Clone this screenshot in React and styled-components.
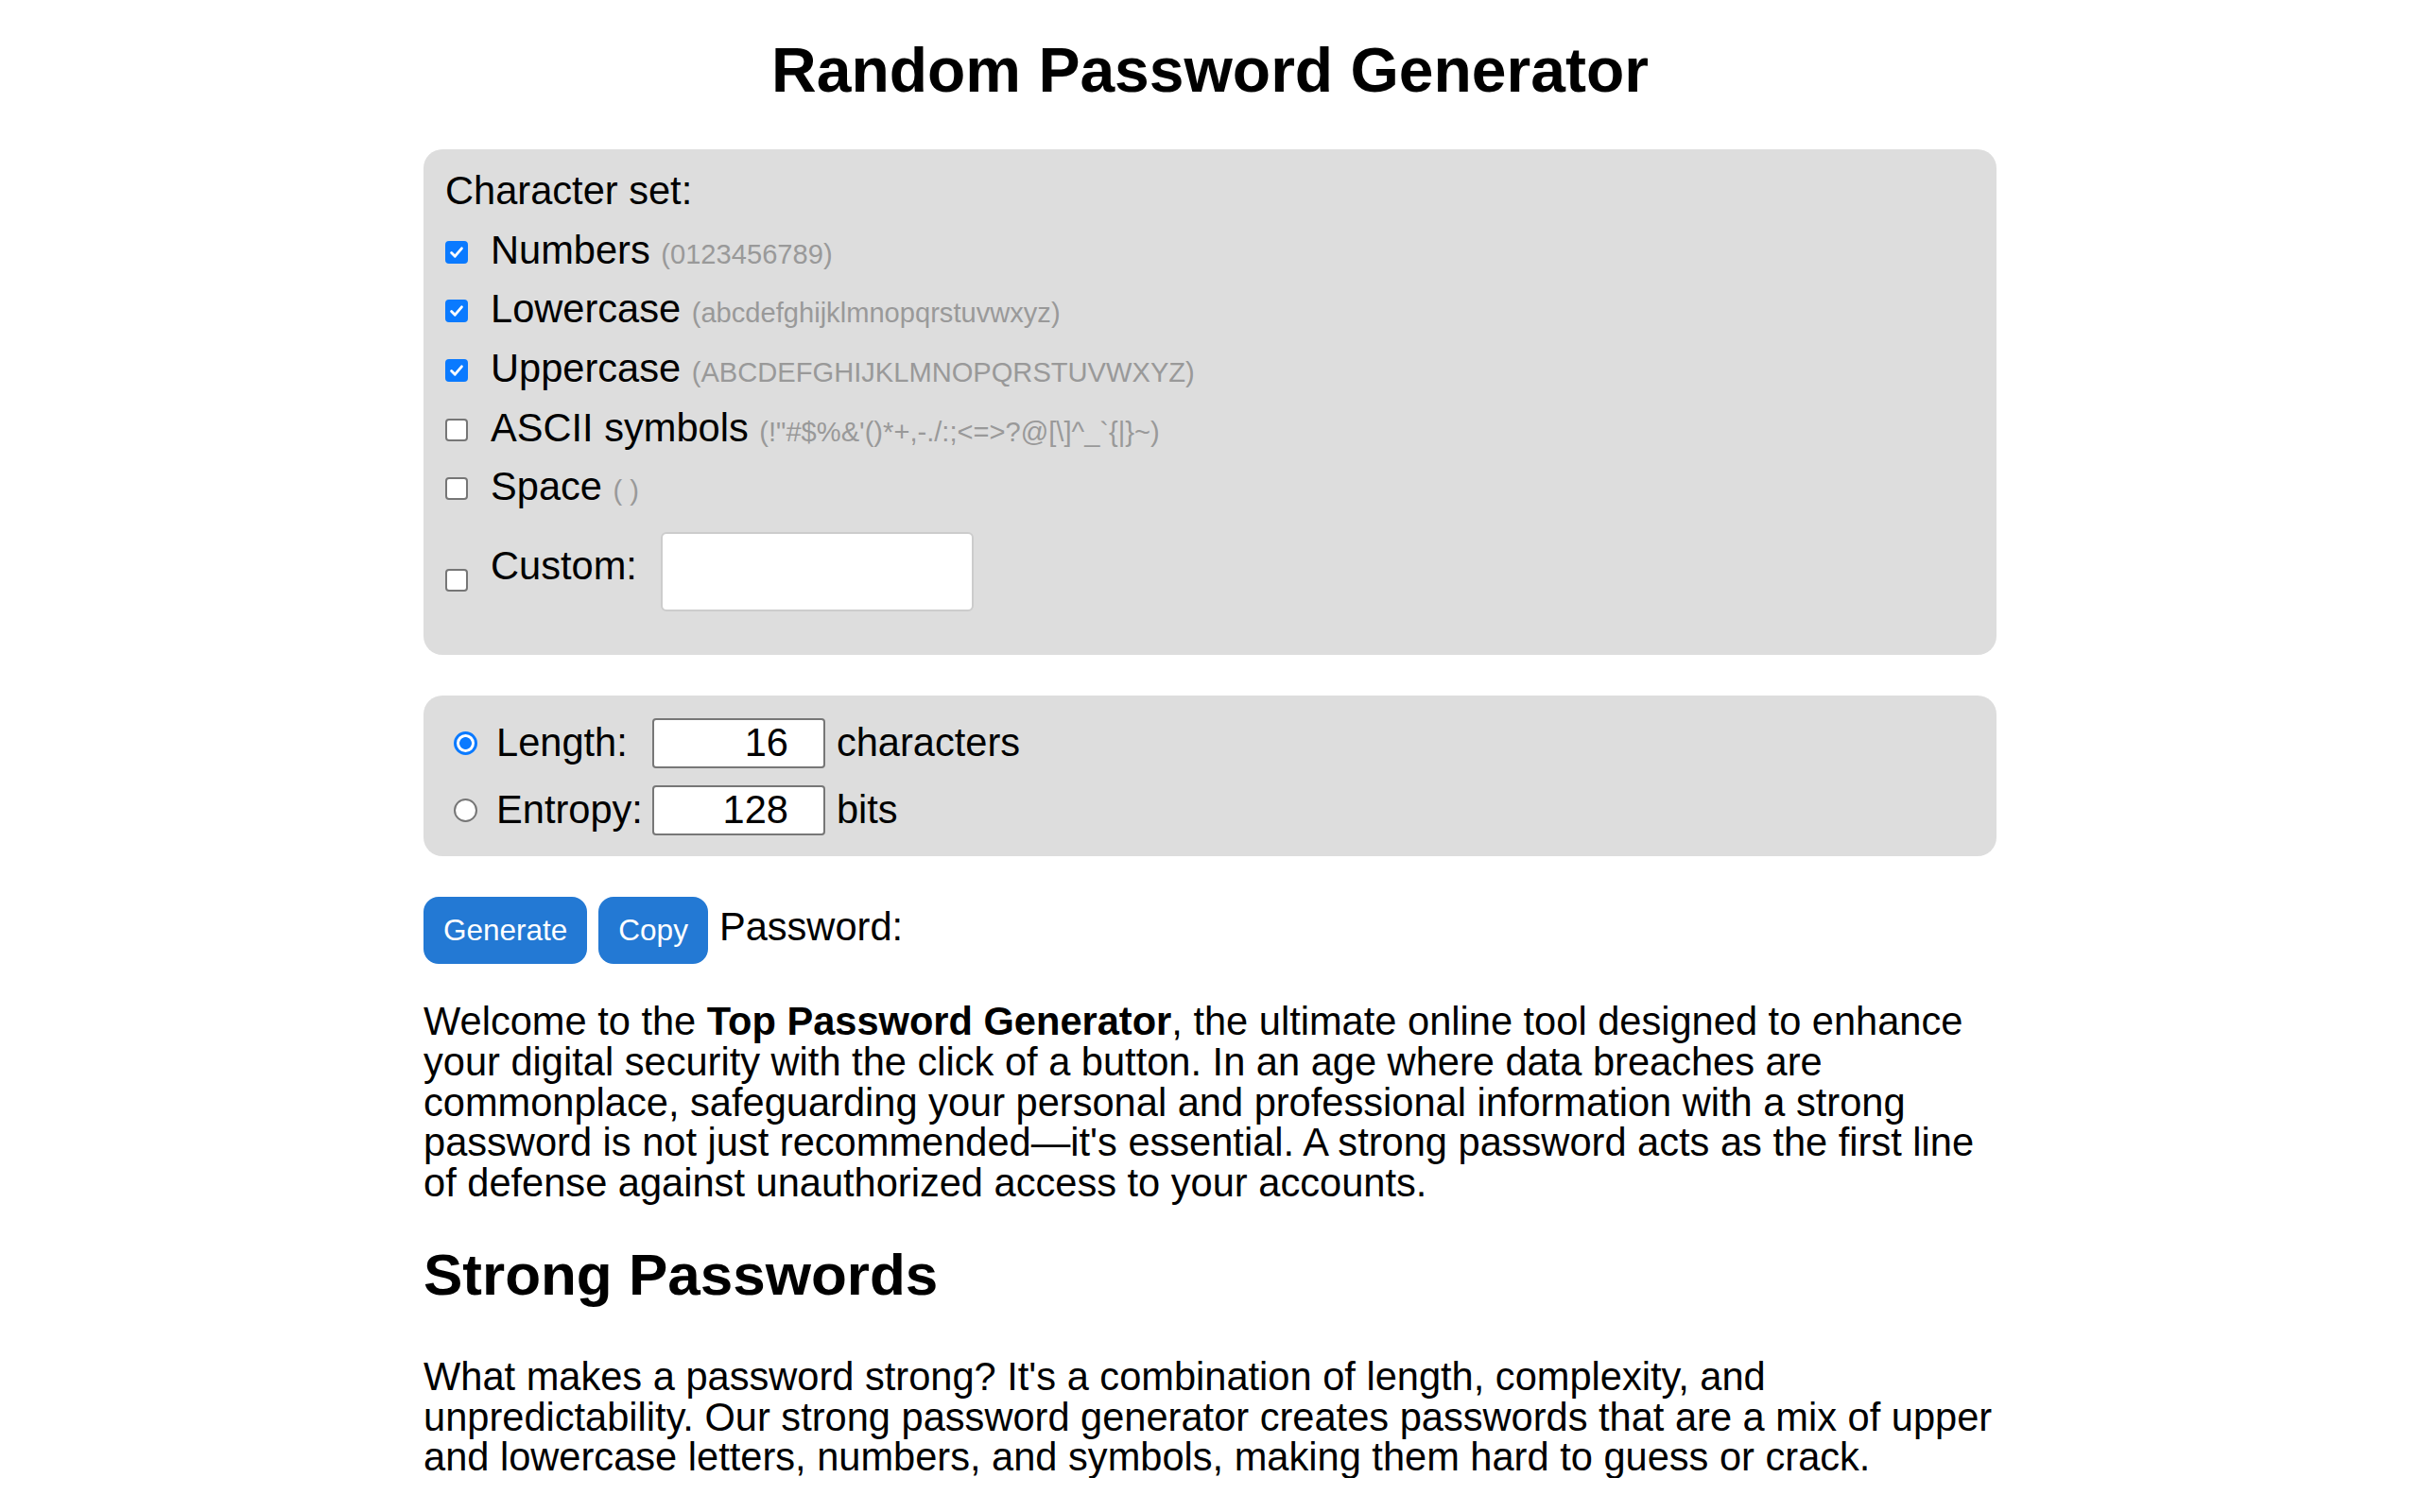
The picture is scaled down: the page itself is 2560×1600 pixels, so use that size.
import React from "react";
import styled, { createGlobalStyle } from "styled-components";

const GlobalStyle = createGlobalStyle`
  html, body {
    margin: 0;
    padding: 0;
    background: #ffffff;
  }
  body {
    font-family: "Liberation Sans", Arial, Helvetica, sans-serif;
    font-size: 41.6px;
    line-height: 1.04;
    color: #000;
  }
`;

const charsets = [
  { label: "Numbers", hint: "(0123456789)", checked: true },
  { label: "Lowercase", hint: "(abcdefghijklmnopqrstuvwxyz)", checked: true },
  { label: "Uppercase", hint: "(ABCDEFGHIJKLMNOPQRSTUVWXYZ)", checked: true },
  { label: "ASCII symbols", hint: "(!\"#$%&'()*+,-./:;<=>?@[\\]^_`{|}~)", checked: false },
  { label: "Space", hint: "( )", checked: false },
];

const tick =
  "url(\"data:image/svg+xml;utf8,<svg xmlns='http://www.w3.org/2000/svg' viewBox='0 0 24 24'><path d='M5.5 12.5 L10 17 L18.5 7' fill='none' stroke='white' stroke-width='3.4' stroke-linecap='round' stroke-linejoin='round'/></svg>\")";

const App = () => {
  return (
    <>
      <GlobalStyle />
      <Page>
        <Title>Random Password Generator</Title>

        <Panel>
          <SetHeading>Character set:</SetHeading>
          {charsets.map((c) => (
            <CheckRow key={c.label}>
              <Check type="checkbox" defaultChecked={c.checked} />
              <span>
                {c.label} <Hint>{c.hint}</Hint>
              </span>
            </CheckRow>
          ))}
          <CustomRow>
            <CustomCheck type="checkbox" />
            <CustomLabel>Custom:</CustomLabel>
            <CustomInput type="text" />
          </CustomRow>
        </Panel>

        <LengthPanel>
          <Radio type="radio" name="mode" defaultChecked />
          <FieldLabel>Length:</FieldLabel>
          <NumberField type="text" defaultValue="16" />
          <Unit>characters</Unit>

          <Radio type="radio" name="mode" />
          <FieldLabel>Entropy:</FieldLabel>
          <NumberField type="text" defaultValue="128" />
          <Unit>bits</Unit>
        </LengthPanel>

        <Actions>
          <Button>Generate</Button>
          <Button>Copy</Button>
          <OutputLabel>Password:</OutputLabel>
        </Actions>

        <Paragraph>
          Welcome to the <strong>Top Password Generator</strong>, the ultimate
          online tool designed to enhance your digital security with the click
          of a button. In an age where data breaches are commonplace,
          safeguarding your personal and professional information with a strong
          password is not just recommended—it's essential. A strong password
          acts as the first line of defense against unauthorized access to your
          accounts.
        </Paragraph>

        <Subtitle>Strong Passwords</Subtitle>

        <Paragraph>
          What makes a password strong? It's a combination of length,
          complexity, and unpredictability. Our strong password generator
          creates passwords that are a mix of upper and lowercase letters,
          numbers, and symbols, making them hard to guess or crack.
        </Paragraph>
      </Page>
    </>
  );
};

const Page = styled.div`
  width: 65%;
  margin: 0 auto;
  padding-top: 40px;
`;

const Title = styled.h1`
  font-size: 66px;
  font-weight: bold;
  line-height: 1.04;
  text-align: center;
  margin: 0 0 49px;
`;

const Panel = styled.div`
  background: #dddddd;
  border-radius: 20px;
  padding: 13.5px 23px 46px;
  display: flex;
  flex-direction: column;
`;

const SetHeading = styled.div`
  height: 62.6px;
  line-height: 62.6px;
`;

const CheckRow = styled.label`
  display: flex;
  align-items: baseline;
  height: 62.6px;
  line-height: 62.6px;
`;

const Check = styled.input`
  appearance: none;
  box-sizing: border-box;
  width: 24px;
  height: 24px;
  margin: 0 24px 0 0;
  flex: none;
  border: 2px solid #767676;
  border-radius: 4px;
  background: #ffffff;

  &:checked {
    border-color: #0a7aff;
    background: #0a7aff ${tick} center / 100% 100% no-repeat;
  }
`;

const Hint = styled.span`
  font-size: 0.7em;
  line-height: 1;
  color: #999999;
`;

const CustomRow = styled.div`
  display: flex;
  align-items: flex-end;
  padding-top: 16px;
`;

const CustomCheck = styled(Check)`
  margin-bottom: 21px;
`;

const CustomLabel = styled.label`
  line-height: 46px;
  margin: 0 25px 25px 0;
`;

const CustomInput = styled.input`
  box-sizing: border-box;
  width: 331px;
  height: 84px;
  border: 2px solid #cccccc;
  border-radius: 6px;
  background: #fff;
  font: inherit;
  padding: 0 12px;
  outline: none;
`;

const LengthPanel = styled.div`
  margin-top: 43px;
  background: #dddddd;
  border-radius: 20px;
  padding: 24px 32px 22px;
  display: grid;
  grid-template-columns: 35px auto 183px 1fr;
  grid-auto-rows: 53px;
  column-gap: 11px;
  row-gap: 18px;
  align-items: center;
`;

const Radio = styled.input`
  appearance: none;
  box-sizing: border-box;
  width: 25px;
  height: 25px;
  margin: 0;
  border: 2px solid #767676;
  border-radius: 50%;
  background: #ffffff;

  &:checked {
    border: 3px solid #0a7aff;
    background: radial-gradient(circle, #0a7aff 0 6px, #ffffff 6.8px);
  }
`;

const FieldLabel = styled.span`
  line-height: 46px;
  margin-left: -1px;
`;

const NumberField = styled.input`
  box-sizing: border-box;
  width: 183px;
  height: 53px;
  margin-left: -1px;
  border: 2px solid #777777;
  border-radius: 4px;
  background: #fff;
  font: inherit;
  text-align: right;
  padding: 0 37px 0 8px;
  outline: none;
`;

const Unit = styled.span`
  line-height: 46px;
`;

const Actions = styled.div`
  margin-top: 43px;
  display: flex;
  align-items: baseline;
`;

const Button = styled.button`
  font-family: inherit;
  font-size: 31.5px;
  line-height: normal;
  color: #ffffff;
  background: #2379d4;
  border: none;
  border-radius: 16px;
  padding: 17.4px 21px;
  margin-right: 12px;
  cursor: pointer;
`;

const OutputLabel = styled.span`
  margin-left: 0;
`;

const Paragraph = styled.p`
  margin: 40px 0 0;
  line-height: 42.6px;
`;

const Subtitle = styled.h2`
  font-size: 62px;
  font-weight: bold;
  line-height: 1.04;
  margin: 44px 0 54px;
`;

export default App;
